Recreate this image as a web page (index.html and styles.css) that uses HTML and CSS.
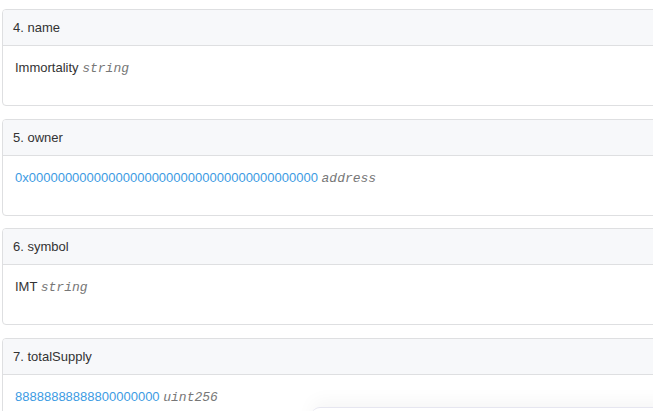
FILE: index.html
```html
<!DOCTYPE html>
<html>
<head>
  <title>Read Contract</title>
  <link rel="stylesheet" href="styles.css">
</head>
<body>
  <div class="fields">
    <div class="field-card">
      <div class="field-header">4. name</div>
      <div class="field-body">Immortality <i class="field-type">string</i></div>
    </div>
    <div class="field-card">
      <div class="field-header">5. owner</div>
      <div class="field-body"><a class="field-link" href="#">0x0000000000000000000000000000000000000000</a> <i class="field-type">address</i></div>
    </div>
    <div class="field-card">
      <div class="field-header">6. symbol</div>
      <div class="field-body">IMT <i class="field-type">string</i></div>
    </div>
    <div class="field-card">
      <div class="field-header">7. totalSupply</div>
      <div class="field-body"><span class="field-link">88888888888800000000</span> <i class="field-type">uint256</i></div>
    </div>
  </div>
  <div class="float-panel"></div>
</body>
</html>
```

FILE: styles.css
```css
html {
  overflow: hidden;
}

body {
  margin: 0;
  font-family: "Liberation Sans", Arial, sans-serif;
  font-size: 13px;
  color: #333;
  background-color: #ffffff;
}

.fields {
  padding: 9px 0 0 2px;
  width: 700px;
}

.field-card {
  border: 1px solid #dedfe1;
  border-radius: 4px;
  margin-bottom: 12.67px;
  overflow: hidden;
}

.field-header {
  background-color: #f7f8fa;
  border-bottom: 1px solid #dedfe1;
  padding: 9px 10px;
  line-height: 17px;
}

.field-body {
  padding: 13px 12px 28px;
  line-height: 18px;
  height: 18px;
}

.field-link {
  color: #3c9be3;
  text-decoration: none;
}

.field-type {
  font-family: "Liberation Mono", "Courier New", monospace;
  font-size: 13px;
  color: #777;
}

.float-panel {
  position: fixed;
  left: 312px;
  top: 407px;
  width: 400px;
  height: 60px;
  background: #ffffff;
  border-top: 1px solid #e6e6f0;
  border-radius: 8px;
  box-shadow: 0 -6px 18px rgba(0, 0, 0, 0.04);
}
```
